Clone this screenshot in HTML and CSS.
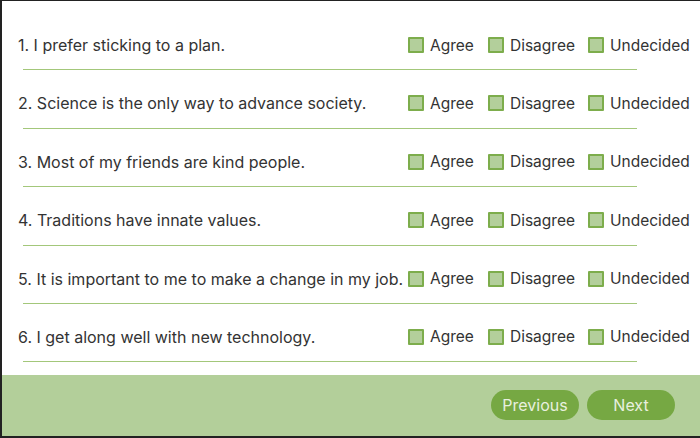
FILE: index.html
```html
<!DOCTYPE html>
<html>
<head>
<meta charset="utf-8">
<link rel="stylesheet" href="styles.css">
</head>
<body>
<div class="frame">
  <div class="questions">
    <div class="q">
      <div class="row"><span class="text">1. I prefer sticking to a plan.</span>
        <div class="opts"><label class="opt"><span class="box"></span>Agree</label><label class="opt"><span class="box"></span>Disagree</label><label class="opt"><span class="box"></span>Undecided</label></div></div>
      <div class="rule"></div>
    </div>
    <div class="q">
      <div class="row"><span class="text">2. Science is the only way to advance society.</span>
        <div class="opts"><label class="opt"><span class="box"></span>Agree</label><label class="opt"><span class="box"></span>Disagree</label><label class="opt"><span class="box"></span>Undecided</label></div></div>
      <div class="rule"></div>
    </div>
    <div class="q">
      <div class="row"><span class="text">3. Most of my friends are kind people.</span>
        <div class="opts"><label class="opt"><span class="box"></span>Agree</label><label class="opt"><span class="box"></span>Disagree</label><label class="opt"><span class="box"></span>Undecided</label></div></div>
      <div class="rule"></div>
    </div>
    <div class="q">
      <div class="row"><span class="text">4. Traditions have innate values.</span>
        <div class="opts"><label class="opt"><span class="box"></span>Agree</label><label class="opt"><span class="box"></span>Disagree</label><label class="opt"><span class="box"></span>Undecided</label></div></div>
      <div class="rule"></div>
    </div>
    <div class="q">
      <div class="row"><span class="text">5. It is important to me to make a change in my job.</span>
        <div class="opts"><label class="opt"><span class="box"></span>Agree</label><label class="opt"><span class="box"></span>Disagree</label><label class="opt"><span class="box"></span>Undecided</label></div></div>
      <div class="rule"></div>
    </div>
    <div class="q">
      <div class="row"><span class="text">6. I get along well with new technology.</span>
        <div class="opts"><label class="opt"><span class="box"></span>Agree</label><label class="opt"><span class="box"></span>Disagree</label><label class="opt"><span class="box"></span>Undecided</label></div></div>
      <div class="rule"></div>
    </div>
  </div>
  <div class="footer">
    <button class="btn">Previous</button>
    <button class="btn">Next</button>
  </div>
</div>
</body>
</html>
```
FILE: styles.css
```css
html, body {
  margin: 0;
  padding: 0;
  background: #ffffff;
}
.frame {
  width: 700px;
  height: 438px;
  box-sizing: border-box;
  border-top: 1px solid #222222;
  border-left: 2px solid #222222;
  border-bottom: 2px solid #222222;
  display: flex;
  flex-direction: column;
  font-family: Inter, "Noto Sans", sans-serif;
  font-size: 16px;
  color: #333333;
  overflow: hidden;
}
.questions {
  padding-top: 33px;
  padding-left: 16px;
  display: flex;
  flex-direction: column;
  gap: 22px;
}
.row {
  display: flex;
  align-items: center;
  height: 22px;
  margin-bottom: 13.4px;
}
.text {
  white-space: nowrap;
  flex: 1;
}
.opts {
  display: grid;
  grid-template-columns: 80px 100px auto;
  align-items: center;
  flex-shrink: 0;
  width: 292px;
  font-size: 15.5px;
}
.opt {
  display: flex;
  align-items: center;
  white-space: nowrap;
}
.box {
  width: 16px;
  height: 16px;
  box-sizing: border-box;
  background: #b3cf9b;
  border: 2px solid #7dad4c;
  border-radius: 1px;
  margin-right: 6px;
}
.rule {
  height: 1px;
  background: #a3c77a;
  margin-left: 5px;
  width: 614px;
}
.footer {
  margin-top: 13px;
  flex: 1;
  background: #b3cf9a;
  display: flex;
  justify-content: flex-end;
  align-items: center;
  gap: 8px;
  padding-right: 25px;
  padding-bottom: 2px;
}
.btn {
  width: 88px;
  height: 30px;
  border: none;
  border-radius: 15px;
  background: #76a843;
  color: #e8f0df;
  font-family: Inter, "Noto Sans", sans-serif;
  font-size: 16px;
  padding: 0;
}
```
